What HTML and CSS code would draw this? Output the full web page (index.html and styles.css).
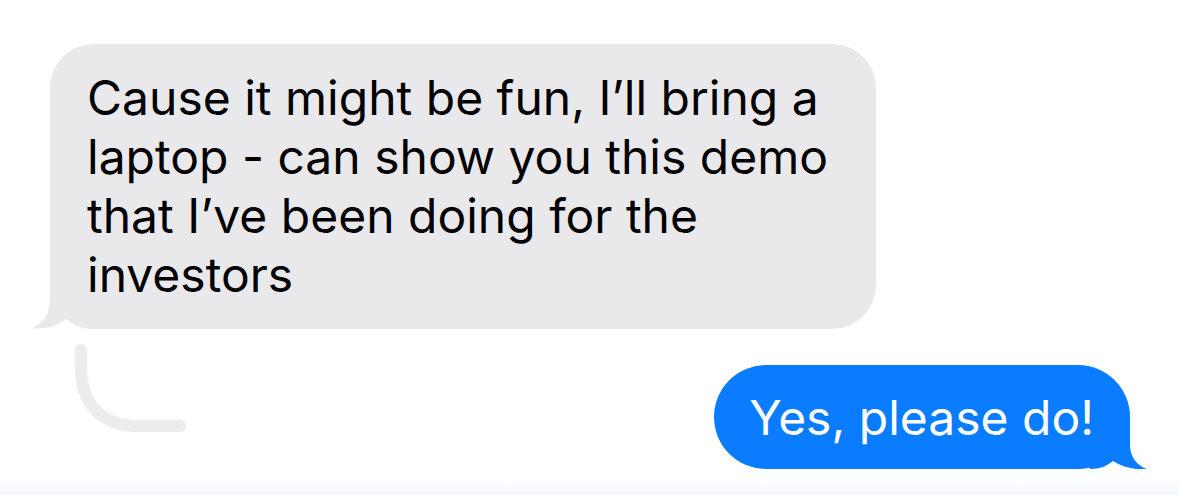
FILE: index.html
```html
<!DOCTYPE html>
<html lang="en">
<head>
    <meta charset="UTF-8">
    <meta name="viewport" content="width=device-width, initial-scale=1.0">
    <title>Messages</title>
    <link rel="stylesheet" href="styles.css">
</head>
<body>
    <div class="thread">
        <div class="msg msg-in">
            <div class="bubble bubble-in">
                <span class="text">Cause it might be fun, I’ll bring a laptop - can show you this demo that I’ve been doing for the investors</span>
                <svg class="tail tail-in" width="60" height="50" viewBox="0 0 60 50">
                    <path d="M18 0 L18 21 C18 36 10 45 0 49 C13 51 26 47 35 39 C40 45 48 50 60 50 L60 0 Z"/>
                </svg>
            </div>
            <!-- reply thread line -->
            <svg class="reply-line" width="120" height="100" viewBox="0 0 120 100">
                <path d="M7 8 L7 26 C7 62 28 84 64 84 L106 84"/>
            </svg>
        </div>

        <div class="msg msg-out">
            <div class="bubble bubble-out">
                <span class="text">Yes, please do!</span>
                <svg class="tail tail-out" width="57" height="49" viewBox="0 0 57 49">
                    <path d="M40 0 L40 25 C40 38 48 46 57 49 C45 50 32 47 23 41 C17 46 10 49 0 49 L0 0 Z"/>
                </svg>
            </div>
        </div>
    </div>
</body>
</html>
```

FILE: styles.css
```css
* {
    margin: 0;
    padding: 0;
    box-sizing: border-box;
}

body {
    font-family: Inter, 'Helvetica Neue', 'Liberation Sans', sans-serif;
    background: linear-gradient(to bottom, #ffffff 0, #ffffff 478px, #f3f7fb 495px);
    height: 495px;
    overflow: hidden;
}

.thread {
    display: flex;
    flex-direction: column;
    padding: 44px 49px 0 50px;
    gap: 36px;
}

.msg {
    display: flex;
    position: relative;
}

.msg-out {
    justify-content: flex-end;
}

.bubble {
    position: relative;
    font-size: 48px;
    line-height: 59px;
}

.bubble .text {
    position: relative;
    z-index: 1;
}

.bubble-in {
    width: 826px;
    background-color: #e9e9eb;
    color: #000;
    border-radius: 44px;
    padding: 24px 30px 25px 37px;
}

.bubble-out {
    background-color: #0a7cff;
    color: #fff;
    border-radius: 52px;
    padding: 23px 36px 22px 35px;
}

.tail {
    position: absolute;
    bottom: 0;
}

.tail-in {
    left: -18px;
    fill: #e9e9eb;
}

.tail-out {
    right: -17px;
    fill: #0a7cff;
}

.reply-line {
    position: absolute;
    left: 24px;
    top: 298px;
    fill: none;
    stroke: #ececee;
    stroke-width: 12;
    stroke-linecap: round;
}
```
